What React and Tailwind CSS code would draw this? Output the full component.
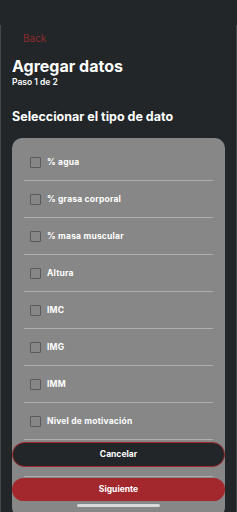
import React from 'react';

const TYPES = ['% agua', '% grasa corporal', '% masa muscular', 'Altura', 'IMC', 'IMG', 'IMM', 'Nivel de motivación', 'Peso'];

export default function App() {
  return (
    <div className="relative h-[512px] w-[237px] overflow-hidden bg-[#222629]" style={{ fontFamily: 'Inter, "Noto Sans", sans-serif' }}>
      {/* sheet edges */}
      <div className="absolute inset-x-0 top-[25px] bottom-0 border-x border-[#44474a] pointer-events-none" />

      <div className="px-3 pt-[31px]">
        <div className="ml-[11px] text-[10px] leading-[14px] text-[#8f2a2e]">Back</div>

        <h1 className="mt-[11px] text-[16px] font-bold leading-[20px] text-white">Agregar datos</h1>
        <p className="mt-[1px] text-[8.5px] font-semibold leading-[10px] text-white">Paso 1 de 2</p>

        <h2 className="mt-[22px] text-[12.5px] font-bold leading-[16px] text-white">Seleccionar el tipo de dato</h2>

        <div className="mt-[13px] rounded-[10px] bg-[#878787] px-3 pt-[6px] pb-10">
          {TYPES.map((t) => (
            <div key={t} className="flex h-[37px] items-center gap-[6px] border-b border-[#aeaeae] pl-[6px]">
              <span className="h-[11px] w-[11px] border border-[#5a5a5e] rounded-[1px]" />
              <span className="text-[8.5px] font-bold text-white tracking-[0.2px]">{t}</span>
            </div>
          ))}
        </div>
      </div>

      {/* footer buttons */}
      <div className="absolute left-3 right-3 top-[442px] flex flex-col gap-[11px]">
        <button className="h-[25px] rounded-full border border-[#a0282c] bg-[#222629] text-[8.5px] font-bold text-white">Cancelar</button>
        <button className="h-[23px] rounded-full bg-[#a2282d] text-[8.5px] font-bold text-white">Siguiente</button>
      </div>
      <div className="absolute left-[77px] top-[504px] h-[3px] w-[83px] rounded-full bg-[#d9d9d9]" />
    </div>
  );
}
